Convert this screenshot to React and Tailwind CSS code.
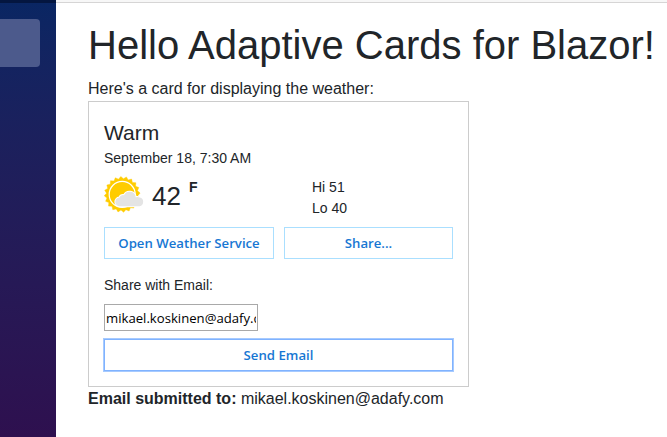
import React from "react";

const sunTeeth = Array.from({ length: 40 }, (_, i) => {
  const angle = ((i - 0.5) * Math.PI) / 20;
  const radius = i % 2 === 0 ? 18 : 15.7;
  return `${(18.2 + radius * Math.cos(angle)).toFixed(2)},${(17.4 + radius * Math.sin(angle)).toFixed(2)}`;
}).join(" ");

function WeatherIcon() {
  return (
    <svg className="h-10 w-10 shrink-0 overflow-visible" viewBox="0 0 40 40" aria-hidden="true">
      <polygon points={sunTeeth} fill="#ffcc00" stroke="#ffcc00" strokeWidth="0.4" />
      <circle cx="18.2" cy="17.4" r="13" fill="none" stroke="#fff" strokeWidth="1.2" />
      <path
        d="M16 29.2A4.3 4.3 0 0 1 15.3 20.6A4.2 4.2 0 0 1 20 18.2A6.2 6.2 0 0 1 31.7 20.2A4.9 4.9 0 0 1 35.8 20.6A4.4 4.4 0 0 1 35.6 29.2Z"
        fill="#e4e4e4"
        stroke="#fff"
        strokeWidth="2"
        paintOrder="stroke"
      />
    </svg>
  );
}

function ActionButton({ children, className = "" }) {
  return (
    <button
      type="button"
      className={`flex h-8 items-center justify-center border bg-white font-['Open_Sans',sans-serif] text-[13.2px] font-semibold leading-[18px] text-[#1777d3] ${className}`}
    >
      {children}
    </button>
  );
}

function WeatherCard() {
  return (
    <section className="h-[286px] w-[381px] border border-[#cccccc] px-[15px] pt-[18px] text-sm">
      <h2 className="h-[26px] text-[21px] leading-[26px]">Warm</h2>
      <p className="mt-[2px] h-5 leading-5">September 18, 7:30 AM</p>
      <div className="mt-[9px] flex h-[42px]">
        <WeatherIcon />
        <span className="ml-2 text-[26px] leading-[38px]">42</span>
        <span className="ml-2 text-sm font-bold leading-5">F</span>
        <div className="ml-auto w-[141px] leading-[21px]">
          <p>Hi 51</p>
          <p>Lo 40</p>
        </div>
      </div>
      <div className="mt-2 flex gap-2.5">
        <ActionButton className="w-[170px] border-[#aadfff]">Open Weather Service</ActionButton>
        <ActionButton className="flex-1 border-[#aadfff]">Share...</ActionButton>
      </div>
      <label htmlFor="email" className="mt-4 block h-5 leading-5">
        Share with Email:
      </label>
      <input
        id="email"
        type="text"
        defaultValue="mikael.koskinen@adafy.com"
        className="mt-[9px] block h-[27px] w-[154px] border border-[#a9a9a9] bg-white px-[1px] font-['Open_Sans',sans-serif] text-[13.15px] text-black outline-none"
      />
      <ActionButton className="mt-2 w-full border-[#80b3ff] ring-1 ring-[#80b3ff]/70">Send Email</ActionButton>
    </section>
  );
}

export default function App() {
  return (
    <div className="flex h-[437px] w-[667px] overflow-hidden bg-white font-['Liberation_Sans',Arial,sans-serif] text-[#212529]">
      <aside className="w-14 shrink-0 bg-linear-to-b from-[#092663] to-[#2e104f]">
        <div className="h-[3px] bg-[#041640]" />
        <div className="mt-4 h-12 w-10 rounded-r bg-[#4c5a8c]" />
      </aside>
      <main className="min-w-0 flex-1">
        <div className="h-[3px] border-b border-[#d6d5d5] bg-[#f7f7f7]" />
        <div className="pl-8 pt-[18px]">
          <h1 className="h-14 whitespace-nowrap text-[40px] leading-[48px]">Hello Adaptive Cards for Blazor!</h1>
          <p className="h-6 leading-6">Here's a card for displaying the weather:</p>
          <WeatherCard />
          <p className="leading-6">
            <strong>Email submitted to:</strong> mikael.koskinen@adafy.com
          </p>
        </div>
      </main>
    </div>
  );
}
